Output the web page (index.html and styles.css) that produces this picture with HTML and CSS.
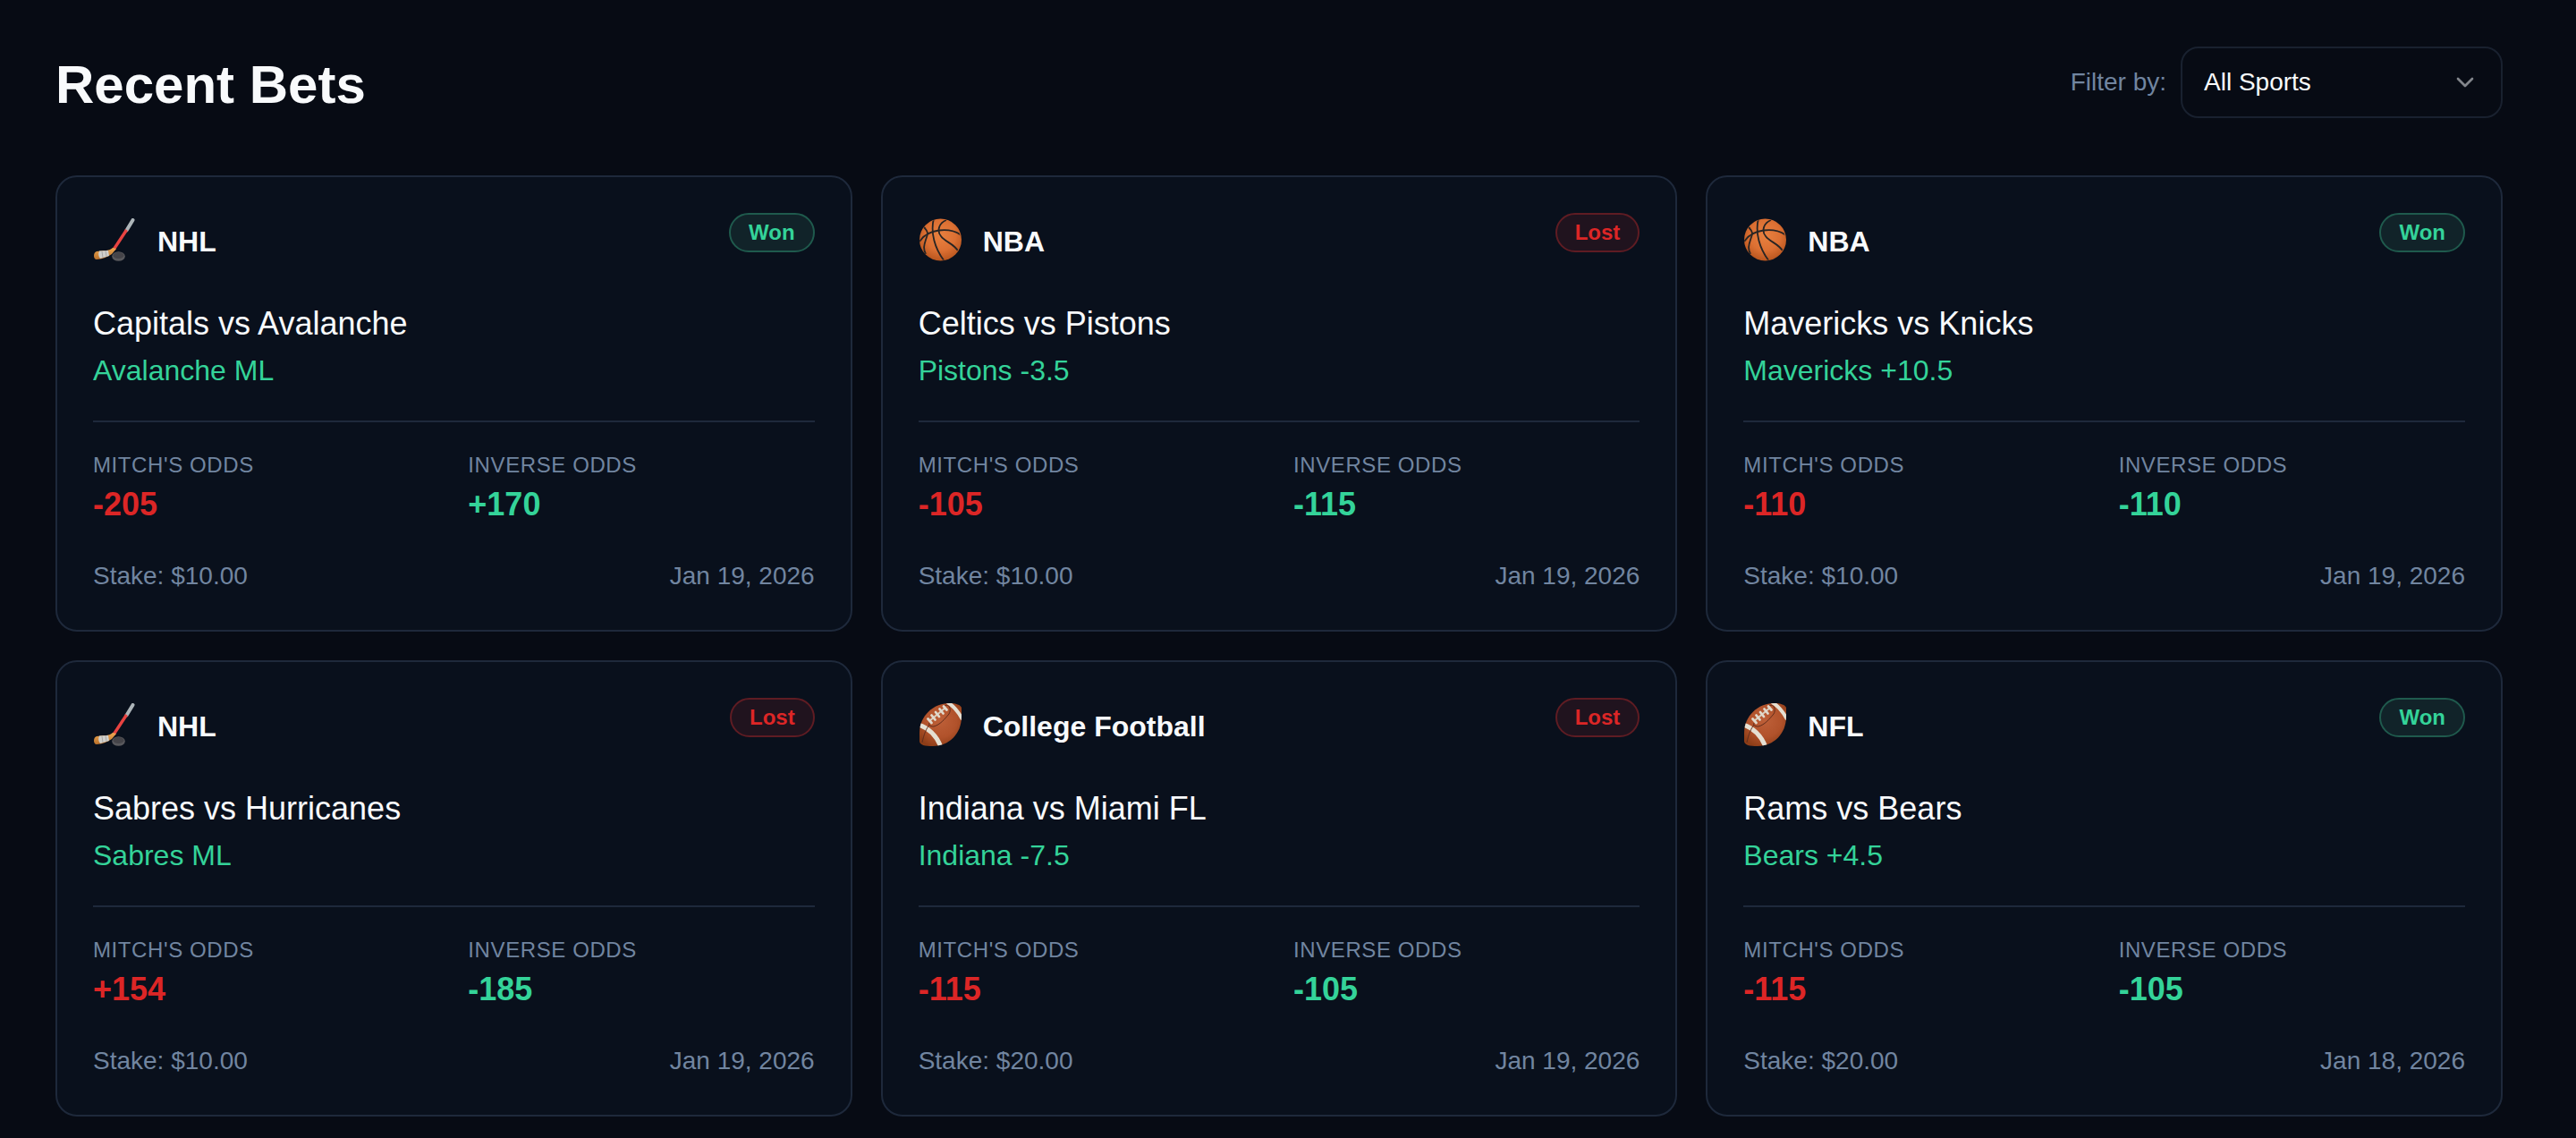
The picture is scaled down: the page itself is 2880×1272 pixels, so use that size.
FILE: index.html
```html
<!DOCTYPE html>
<html lang="en">
<head>
<meta charset="utf-8">
<meta name="viewport" content="width=device-width, initial-scale=1">
<title>Recent Bets</title>
<link rel="stylesheet" href="styles.css">
</head>
<body>
<svg class="sprite" aria-hidden="true">
  <defs>
    <radialGradient id="ball-fill" cx="0.5" cy="0.4" r="0.6">
      <stop offset="0" stop-color="#e8803f"/>
      <stop offset="0.6" stop-color="#dc7033"/>
      <stop offset="1" stop-color="#b9561f"/>
    </radialGradient>
    <radialGradient id="leather" cx="0.5" cy="0.4" r="0.65">
      <stop offset="0" stop-color="#bd5f38"/>
      <stop offset="0.6" stop-color="#b1522b"/>
      <stop offset="1" stop-color="#8d3d17"/>
    </radialGradient>
    <linearGradient id="blade" x1="0" y1="0" x2="0" y2="1">
      <stop offset="0" stop-color="#f0a951"/>
      <stop offset="1" stop-color="#b9702a"/>
    </linearGradient>
    <clipPath id="ball-clip"><circle cx="24" cy="24" r="23"/></clipPath>
    <clipPath id="football-clip"><path d="M1 33C1 14 17 0 34 0C41 0 47 2 48 5V15C48 34 34 48 16 48C7 48 1 47 1 42Z"/></clipPath>
  </defs>
  <symbol id="hockey" viewBox="0 0 48 48">
    <path d="M44.5 2L37.5 13.5" stroke="#adb5b9" stroke-width="4" stroke-linecap="round"/>
    <path d="M37.5 13L23 35" stroke="#e84341" stroke-width="3.4"/>
    <path d="M22 33L26 34L21 40C17 43 9 46 4 46C0 46 0 38 4 37C10 36 18 37 22 33Z" fill="url(#blade)"/>
    <path d="M7 36.5L17 36L18 42L8 45Q5 41 7 36.5Z" fill="#d0cfcb"/>
    <path d="M10 37L11 44M14 36L15 42.500" stroke="#a9a7a5" stroke-width="1"/>
    <ellipse cx="28.500" cy="42.500" rx="7.300" ry="5.300" fill="#58585c"/>
    <ellipse cx="28.500" cy="41.500" rx="6" ry="3.500" fill="#454449"/>
  </symbol>
  <symbol id="basketball" viewBox="0 0 48 48">
    <circle cx="24.500" cy="24" r="23.500" fill="url(#ball-fill)"/>
    <g clip-path="url(#ball-clip)" fill="none" stroke="#282524" stroke-width="1.800">
      <path d="M1 26C10 12 34 9 48 19"/>
      <path d="M17 0C13 16 18 34 29 48"/>
      <path d="M31 2C23 5 20 14 25 20C30 27 40 28 45 38"/>
      <path d="M6 10C12 16 10 18 8 24C6 30 5 34 8 40"/>
    </g>
  </symbol>
  <symbol id="football" viewBox="0 0 48 48">
    <path d="M1 33C1 14 17 0 34 0C42 0 47 2 48 5V15C48 34 34 48 16 48C7 48 1 47 1 42Z" fill="url(#leather)"/>
    <g clip-path="url(#football-clip)" fill="none">
      <path d="M0 24C12 28 20 36 25 49" stroke="#e5e0d3" stroke-width="5"/>
      <path d="M32 -1C38 2 44 9 49 18" stroke="#e5e0d3" stroke-width="4"/>
      <path d="M4 44C6 34 9 28 12 24M29 3C34 0 37 7 34 12C29 18 24 24 17 26C12 26 11 24 12 22" stroke="#602d1d" stroke-width="1"/>
    </g>
    <path d="M12 20L30 5" stroke="#d9cfbf" stroke-width="2"/>
    <path d="M10.500 17.500L14.500 22M14.500 13.500L18.500 18.500M19 10L23 15M23.500 6.500L27.500 11.500M28 3.500L31.500 7.500" stroke="#e0d9cc" stroke-width="2.800" stroke-linecap="round"/>
  </symbol>
</svg>

<main class="page">
  <header class="header">
    <h1 class="title">Recent Bets</h1>
    <div class="filter">
      <label class="filter-label" for="sport">Filter by:</label>
      <div class="select">
        <select class="select-input" id="sport">
          <option>All Sports</option>
          <option>NHL</option>
          <option>NBA</option>
          <option>NFL</option>
          <option>College Football</option>
        </select>
        <svg class="select-icon" viewBox="0 0 24 24" aria-hidden="true"><path d="m6 9 6 6 6-6"/></svg>
      </div>
    </div>
  </header>

  <section class="grid">
    <article class="card">
      <div class="card-head">
        <div class="sport"><svg class="sport-icon" aria-hidden="true"><use href="#hockey"/></svg><h2 class="sport-name">NHL</h2></div>
        <span class="badge won">Won</span>
      </div>
      <p class="match">Capitals vs Avalanche</p>
      <p class="pick">Avalanche ML</p>
      <dl class="odds">
        <div><dt class="odds-label">Mitch's Odds</dt><dd class="odds-value red">-205</dd></div>
        <div><dt class="odds-label">Inverse Odds</dt><dd class="odds-value green">+170</dd></div>
      </dl>
      <footer class="card-foot"><span>Stake: $10.00</span><time datetime="2026-01-19">Jan 19, 2026</time></footer>
    </article>

    <article class="card">
      <div class="card-head">
        <div class="sport"><svg class="sport-icon" aria-hidden="true"><use href="#basketball"/></svg><h2 class="sport-name">NBA</h2></div>
        <span class="badge lost">Lost</span>
      </div>
      <p class="match">Celtics vs Pistons</p>
      <p class="pick">Pistons -3.5</p>
      <dl class="odds">
        <div><dt class="odds-label">Mitch's Odds</dt><dd class="odds-value red">-105</dd></div>
        <div><dt class="odds-label">Inverse Odds</dt><dd class="odds-value green">-115</dd></div>
      </dl>
      <footer class="card-foot"><span>Stake: $10.00</span><time datetime="2026-01-19">Jan 19, 2026</time></footer>
    </article>

    <article class="card">
      <div class="card-head">
        <div class="sport"><svg class="sport-icon" aria-hidden="true"><use href="#basketball"/></svg><h2 class="sport-name">NBA</h2></div>
        <span class="badge won">Won</span>
      </div>
      <p class="match">Mavericks vs Knicks</p>
      <p class="pick">Mavericks +10.5</p>
      <dl class="odds">
        <div><dt class="odds-label">Mitch's Odds</dt><dd class="odds-value red">-110</dd></div>
        <div><dt class="odds-label">Inverse Odds</dt><dd class="odds-value green">-110</dd></div>
      </dl>
      <footer class="card-foot"><span>Stake: $10.00</span><time datetime="2026-01-19">Jan 19, 2026</time></footer>
    </article>

    <article class="card">
      <div class="card-head">
        <div class="sport"><svg class="sport-icon" aria-hidden="true"><use href="#hockey"/></svg><h2 class="sport-name">NHL</h2></div>
        <span class="badge lost">Lost</span>
      </div>
      <p class="match">Sabres vs Hurricanes</p>
      <p class="pick">Sabres ML</p>
      <dl class="odds">
        <div><dt class="odds-label">Mitch's Odds</dt><dd class="odds-value red">+154</dd></div>
        <div><dt class="odds-label">Inverse Odds</dt><dd class="odds-value green">-185</dd></div>
      </dl>
      <footer class="card-foot"><span>Stake: $10.00</span><time datetime="2026-01-19">Jan 19, 2026</time></footer>
    </article>

    <article class="card">
      <div class="card-head">
        <div class="sport"><svg class="sport-icon" aria-hidden="true"><use href="#football"/></svg><h2 class="sport-name">College Football</h2></div>
        <span class="badge lost">Lost</span>
      </div>
      <p class="match">Indiana vs Miami FL</p>
      <p class="pick">Indiana -7.5</p>
      <dl class="odds">
        <div><dt class="odds-label">Mitch's Odds</dt><dd class="odds-value red">-115</dd></div>
        <div><dt class="odds-label">Inverse Odds</dt><dd class="odds-value green">-105</dd></div>
      </dl>
      <footer class="card-foot"><span>Stake: $20.00</span><time datetime="2026-01-19">Jan 19, 2026</time></footer>
    </article>

    <article class="card">
      <div class="card-head">
        <div class="sport"><svg class="sport-icon" aria-hidden="true"><use href="#football"/></svg><h2 class="sport-name">NFL</h2></div>
        <span class="badge won">Won</span>
      </div>
      <p class="match">Rams vs Bears</p>
      <p class="pick">Bears +4.5</p>
      <dl class="odds">
        <div><dt class="odds-label">Mitch's Odds</dt><dd class="odds-value red">-115</dd></div>
        <div><dt class="odds-label">Inverse Odds</dt><dd class="odds-value green">-105</dd></div>
      </dl>
      <footer class="card-foot"><span>Stake: $20.00</span><time datetime="2026-01-18">Jan 18, 2026</time></footer>
    </article>
  </section>
</main>
</body>
</html>
```
FILE: styles.css
```css
:root {
  --bg: #070b14;
  --card: #09101c;
  --border: #1e293b;
  --text: #f8fafc;
  --muted: #7185a0;
  --green: #34d399;
  --red: #dc2626;
}

* {
  box-sizing: border-box;
  margin: 0;
}

body {
  background: var(--bg);
  color: var(--text);
  font-family: "Liberation Sans", Arial, sans-serif;
  font-size: 28px;
  line-height: 40px;
}

.sprite {
  display: block;
  width: 0;
  height: 0;
}

.page {
  padding: 52px 82px 24px 62px;
}

.header {
  display: flex;
  justify-content: space-between;
  align-items: flex-start;
  margin-bottom: 58px;
}

.title {
  font-size: 60px;
  line-height: 86px;
}

.filter {
  display: flex;
  align-items: center;
  gap: 16px;
}

.filter-label {
  color: var(--muted);
}

.select {
  display: grid;
  grid-template-columns: 360px;
  align-items: center;
}

.select-input,
.select-icon {
  grid-area: 1 / 1;
}

.select-input {
  appearance: none;
  width: 100%;
  height: 80px;
  padding: 0 72px 0 24px;
  border: 2px solid #19212f;
  border-radius: 20px;
  background: var(--bg);
  color: var(--text);
  font: inherit;
}

.select-icon {
  justify-self: end;
  width: 32px;
  height: 32px;
  margin-right: 26px;
  fill: none;
  stroke: #82858b;
  stroke-width: 2;
  stroke-linecap: round;
  stroke-linejoin: round;
  pointer-events: none;
}

.grid {
  display: grid;
  grid-template-columns: repeat(3, 1fr);
  gap: 32px;
}

.card {
  padding: 40px;
  border: 2px solid var(--border);
  border-radius: 24px;
  background: var(--card);
}

.card-head {
  display: flex;
  justify-content: space-between;
  align-items: flex-start;
  margin-bottom: 32px;
}

.sport {
  display: flex;
  align-items: center;
  gap: 24px;
  height: 64px;
}

.sport-icon {
  width: 48px;
  height: 48px;
  margin-bottom: 4px;
}

.sport-name {
  font-size: 32px;
  line-height: 48px;
}

.badge {
  padding: 4px 20px;
  border: 2px solid;
  border-radius: 22px;
  font-size: 24px;
  font-weight: 700;
  line-height: 32px;
}

.won {
  border-color: #1f5a4d;
  background: #112329;
  color: var(--green);
}

.lost {
  border-color: #5f1c23;
  background: #20131e;
  color: var(--red);
}

.match {
  font-size: 36px;
  line-height: 56px;
}

.pick {
  color: var(--green);
  font-size: 32px;
  line-height: 48px;
}

.odds {
  display: grid;
  grid-template-columns: 1fr 1fr;
  gap: 32px;
  margin: 32px 0;
  padding-top: 32px;
  border-top: 2px solid var(--border);
}

.odds-label {
  color: var(--muted);
  font-size: 24px;
  letter-spacing: 0.025em;
  line-height: 32px;
  text-transform: uppercase;
}

.odds-value {
  font-size: 36px;
  font-weight: 700;
  line-height: 56px;
}

.green {
  color: var(--green);
}

.red {
  color: var(--red);
}

.card-foot {
  display: flex;
  justify-content: space-between;
  color: var(--muted);
}

@media (max-width: 1400px) {
  .grid {
    grid-template-columns: 1fr;
  }
}
```
